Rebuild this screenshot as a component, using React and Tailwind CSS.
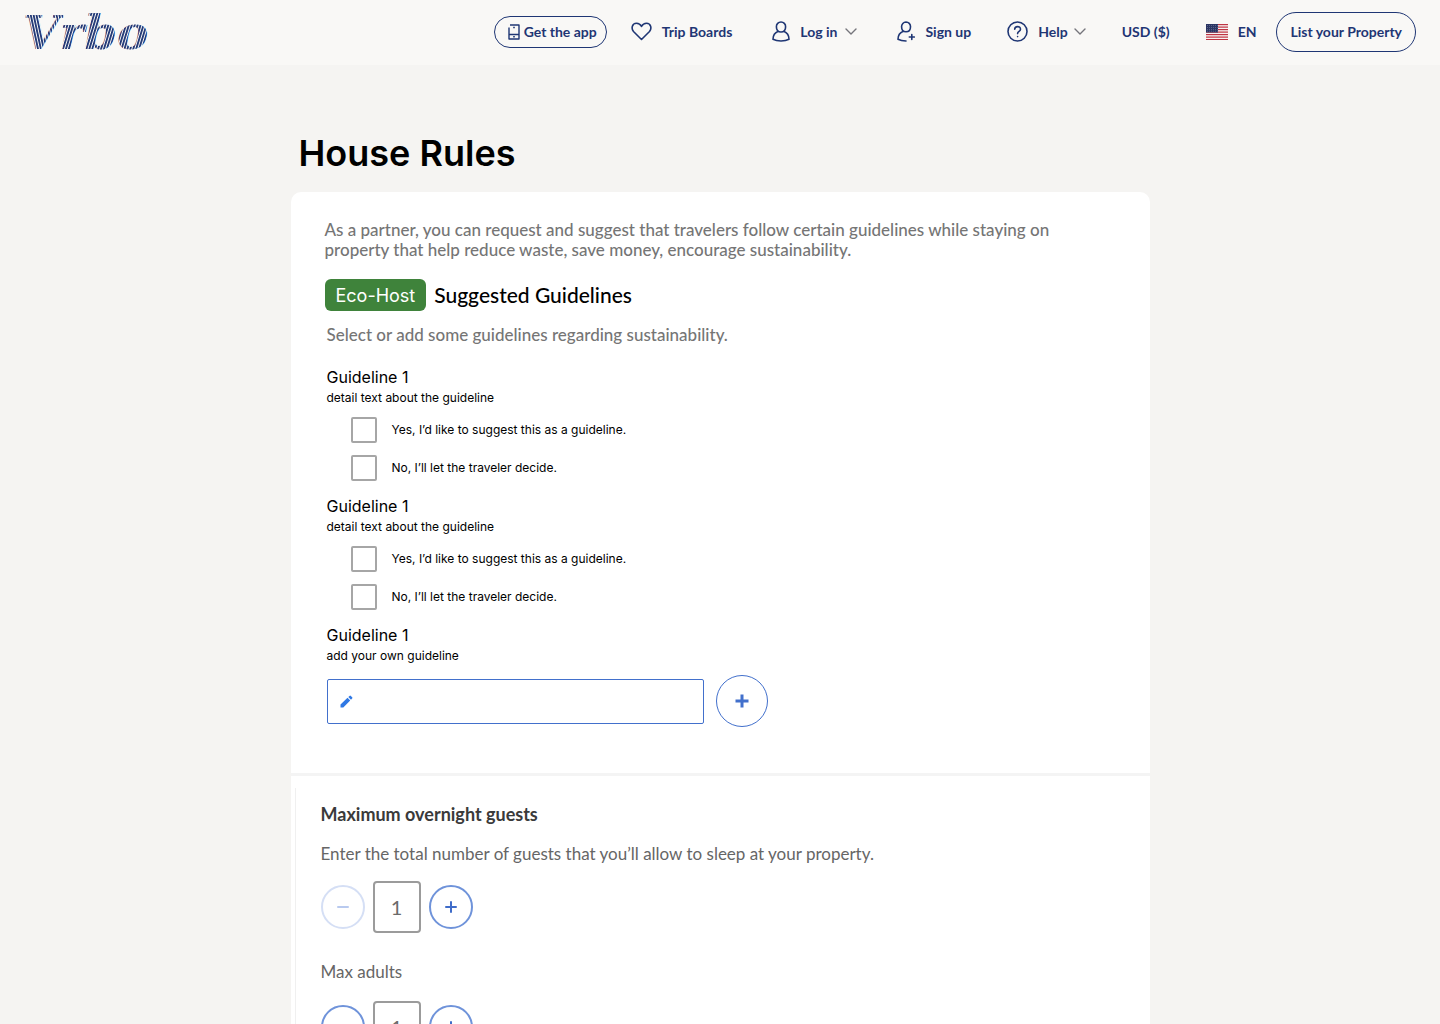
import { useState } from "react";

function Stripes({ id, angle }) {
  return (
    <pattern id={id} width="2.8" height="3" patternUnits="userSpaceOnUse" patternTransform={`rotate(${angle})`}>
      <rect width="3" height="3" fill="#f9f8f6" />
      <rect width="1.800" height="3" fill="#1f3674" />
    </pattern>
  );
}

function Logo() {
  return (
    <a href="#home" aria-label="Vrbo home" className="block shrink-0">
      <svg width="134" height="62" viewBox="0 0 134 62" aria-hidden="true" className="overflow-visible">
        <defs>
          <Stripes id="lean-left" angle={-12} />
          <Stripes id="lean-right" angle={17} />
        </defs>
        <text x="-1" y="48" fontFamily="'DejaVu Serif', serif" fontSize="47" fontWeight="700" fontStyle="italic">
          <tspan fill="url(#lean-left)">V</tspan>
          <tspan fill="url(#lean-right)">rbo</tspan>
        </text>
      </svg>
    </a>
  );
}

const stroke = { fill: "none", stroke: "currentColor", strokeLinecap: "round", strokeLinejoin: "round", "aria-hidden": true };

const PhoneIcon = () => (
  <svg width="12" height="16" viewBox="0 0 12 16" {...stroke} strokeLinecap="butt" strokeWidth="1.4">
    <path d="M1 3.500V15H11V1H2M1 10.500H11M5.200 3.500h1.600M5.200 12.800h1.600" />
  </svg>
);
const HeartIcon = () => (
  <svg width="21" height="19" viewBox="0 0 21 19" {...stroke} strokeWidth="1.6">
    <path d="M10.500 17.500L2.500 9.500C0 6.500 1 1.200 5.500 1.200C8 1.200 9.500 2.500 10.500 4.500C11.500 2.500 13 1.200 15.500 1.200C20 1.200 21 6.500 18.500 9.500Z" />
  </svg>
);
const UserIcon = () => (
  <svg width="18" height="21" viewBox="0 0 18 21" {...stroke} strokeWidth="1.6">
    <path d="M9 1a4.600 4.600 0 0 1 4.600 4.800C13.600 8.800 11.800 11 9 11S4.400 8.800 4.400 5.800A4.600 4.600 0 0 1 9 1ZM6.300 10.200C3 11.500 1 14.500 1 18.300C3 19.400 6 20 9 20S15 19.400 17 18.300C17 14.500 15 11.500 11.700 10.200" />
  </svg>
);
const UserPlusIcon = () => (
  <svg width="18" height="21" viewBox="0 0 18 21" {...stroke} strokeWidth="1.600">
    <path d="M9 1a4.500 4.500 0 0 1 4.500 4.700C13.500 8.700 11.800 10.800 9 10.800S4.600 8.700 4.600 5.700A4.500 4.500 0 0 1 9 1ZM6.300 10.200C3 11.500 1 14.500 1 18.300C3 19.400 5.500 20 9 20M14.800 13.500v5M12.300 16h5" />
  </svg>
);
const HelpIcon = () => (
  <svg width="21" height="21" viewBox="0 0 21 21" {...stroke} strokeWidth="1.600">
    <circle cx="10.500" cy="10.500" r="9.500" />
    <path d="M7.700 8.300C7.700 4.700 13.500 4.700 13.500 8.200C13.500 10.500 10.600 10.300 10.600 12.600M10.600 15.500v.1" />
  </svg>
);
const Chevron = () => (
  <svg width="12" height="7" viewBox="0 0 12 7" {...stroke} strokeWidth="1.400" className="text-[#75757b]">
    <path d="M1 1l5 5 5-5" />
  </svg>
);
const Flag = () => (
  <svg width="22" height="16" viewBox="0 0 22 16" aria-hidden="true">
    <rect width="22" height="16" fill="#f7f2f2" />
    {[0, 2.500, 5, 7.500, 10, 12.500, 15].map((y) => (
      <rect key={y} y={y} width="22" height="1.200" fill="#bf3442" />
    ))}
    <rect width="12" height="8.500" fill="#2b3563" />
    {[1.500, 3.500, 5.500, 7.200].map((y) => (
      <path key={y} d={`M1 ${y}H12`} stroke="#7f86a5" strokeWidth=".7" strokeDasharray=".8 1.200" />
    ))}
  </svg>
);

function Header() {
  const item = "flex items-center gap-2.5 whitespace-nowrap";
  return (
    <header className="flex h-[65px] items-center justify-between bg-[#f9f8f6] px-6 pb-0.5 text-sm font-bold text-[#1f3674]">
      <Logo />
      <nav className="flex items-center font-['Lato',sans-serif]">
        <button className="flex h-8 items-center gap-1 whitespace-nowrap rounded-full border border-[#1f3674] pr-[9px] pl-[13px]">
          <PhoneIcon />
          Get the app
        </button>
        <a href="#boards" className={`${item} ml-6`}><HeartIcon />Trip Boards</a>
        <button className={`${item} ml-10`}><UserIcon /><span className="flex items-center gap-2">Log in<Chevron /></span></button>
        <a href="#signup" className={`${item} ml-10`}><UserPlusIcon />Sign up</a>
        <button className={`${item} ml-9`}><HelpIcon /><span className="flex items-center gap-1.5">Help<Chevron /></span></button>
        <button className={`${item} ml-9`}>USD ($)</button>
        <button className={`${item} ml-9`}><Flag />EN</button>
        <a href="#list" className="ml-5 flex h-10 items-center whitespace-nowrap rounded-full border border-[#1f3674] px-[13px]">List your Property</a>
      </nav>
    </header>
  );
}

function Option({ children }) {
  return (
    <label className="flex items-center gap-[15px] text-xs">
      <input type="checkbox" className="size-[26px] appearance-none rounded-xs border-2 border-[#a6a6a6] bg-white checked:bg-[#3867c8]" />
      {children}
    </label>
  );
}

function Guideline({ title, detail, children }) {
  return (
    <section>
      <h3 className="text-base leading-5">{title}</h3>
      <p className="mt-0.5 text-xs leading-[18px]">{detail}</p>
      {children}
    </section>
  );
}

function Plus({ size }) {
  return (
    <svg width={size} height={size} viewBox="0 0 14 14" {...stroke} strokeLinecap="butt" strokeWidth="3">
      <path d="M7 0.500v13M0.500 7h13" />
    </svg>
  );
}

function Stepper({ label, min }) {
  const [count, setCount] = useState(1);
  const round = "flex size-11 items-center justify-center rounded-full border-2 border-[#6f93da] text-[#3f6cc9] disabled:border-[#d5dff5] disabled:text-[#b9caef]";
  return (
    <div className="flex items-center gap-2">
      <button aria-label={`Fewer: ${label}`} disabled={count <= min} onClick={() => setCount(count - 1)} className={round}>
        <svg width="12" height="12" viewBox="0 0 12 12" {...stroke} strokeWidth="2"><path d="M1 6h10" /></svg>
      </button>
      <input aria-label={label} value={count} readOnly className="h-[52px] w-12 rounded-sm border-2 border-[#9b9b9b] text-center text-xl text-[#6b6b6b]" />
      <button aria-label={`More: ${label}`} onClick={() => setCount(count + 1)} className={round}>
        <svg width="12" height="12" viewBox="0 0 12 12" {...stroke} strokeWidth="2"><path d="M1 6h10M6 1v10" /></svg>
      </button>
    </div>
  );
}

export default function App() {
  return (
    <div className="h-screen overflow-hidden bg-[#f5f4f2] font-['Inter',sans-serif] text-black">
      <Header />
      <main className="mx-auto max-w-[859px] pt-16">
        <h1 className="pl-2 text-4xl leading-12 font-semibold">House Rules</h1>
        <div className="mt-[15px] rounded-t-[10px] bg-white">
          <section className="px-9 pt-7 pb-[46px]">
            <p className="-ml-0.5 font-['Lato',sans-serif] text-[17px] leading-5 font-medium text-[#757575]">
              As a partner, you can request and suggest that travelers follow certain guidelines while staying on property that help reduce waste, save money, encourage sustainability.
            </p>
            <h2 className="mt-[19px] -ml-0.5 flex items-center gap-2 font-['Lato',sans-serif] text-[21px] leading-8 font-medium">
              <span className="rounded-md bg-[#3f833b] px-[11px] pt-0.5 font-['Inter',sans-serif] text-lg leading-[30px] font-normal text-white">Eco-Host</span>
              Suggested Guidelines
            </h2>
            <p className="mt-3.5 font-['Lato',sans-serif] text-[17px] leading-5 font-medium text-[#757575]">Select or add some guidelines regarding sustainability.</p>
            <div className="mt-[22px] flex flex-col gap-[15px]">
              {["first", "second"].map((key) => (
                <Guideline key={key} title="Guideline 1" detail="detail text about the guideline">
                  <div className="mt-2.5 ml-6 flex flex-col gap-3">
                    <Option>Yes, I’d like to suggest this as a guideline.</Option>
                    <Option>No, I’ll let the traveler decide.</Option>
                  </div>
                </Guideline>
              ))}
              <Guideline title="Guideline 1" detail="add your own guideline">
                <form className="mt-2.5 flex items-center gap-3" onSubmit={(e) => e.preventDefault()}>
                  <label className="flex h-[45px] w-[377px] items-center rounded-xs border border-[#4270cc] px-3">
                    <svg width="13" height="13" viewBox="0 0 13 13" aria-hidden="true" fill="#2f78e4">
                      <path d="M0.500 12.500V9.500L7.500 2.800L10.200 5.500L3.300 12.500ZM8.300 2L9.500 0.900Q10.200 0.300 10.900 0.900L12.200 2.200Q12.800 2.900 12.100 3.600L11 4.700Z" />
                    </svg>
                    <input aria-label="Your own guideline" className="ml-2 min-w-0 flex-1 outline-none" />
                  </label>
                  <button aria-label="Add guideline" className="flex size-[52px] items-center justify-center rounded-full border border-[#4270cc] text-[#4270cc]">
                    <Plus size={14} />
                  </button>
                </form>
              </Guideline>
            </div>
          </section>
          <div className="border-t-3 border-[#f4f4f4] pt-3 pl-1">
            <section className="border-l border-[#f0f0f0] pt-3.5 pb-8 pl-[25px] font-['Lato',sans-serif] text-[17px] leading-6 text-[#666]">
              <h2 className="text-lg leading-6 font-bold text-[#3a3a3a]">Maximum overnight guests</h2>
              <p className="mt-4">Enter the total number of guests that you’ll allow to sleep at your property.</p>
              <div className="mt-[15px]"><Stepper label="Maximum overnight guests" min={1} /></div>
              <h3 className="mt-[27px] mb-[17px]">Max adults</h3>
              <Stepper label="Max adults" min={0} />
            </section>
          </div>
        </div>
      </main>
    </div>
  );
}
